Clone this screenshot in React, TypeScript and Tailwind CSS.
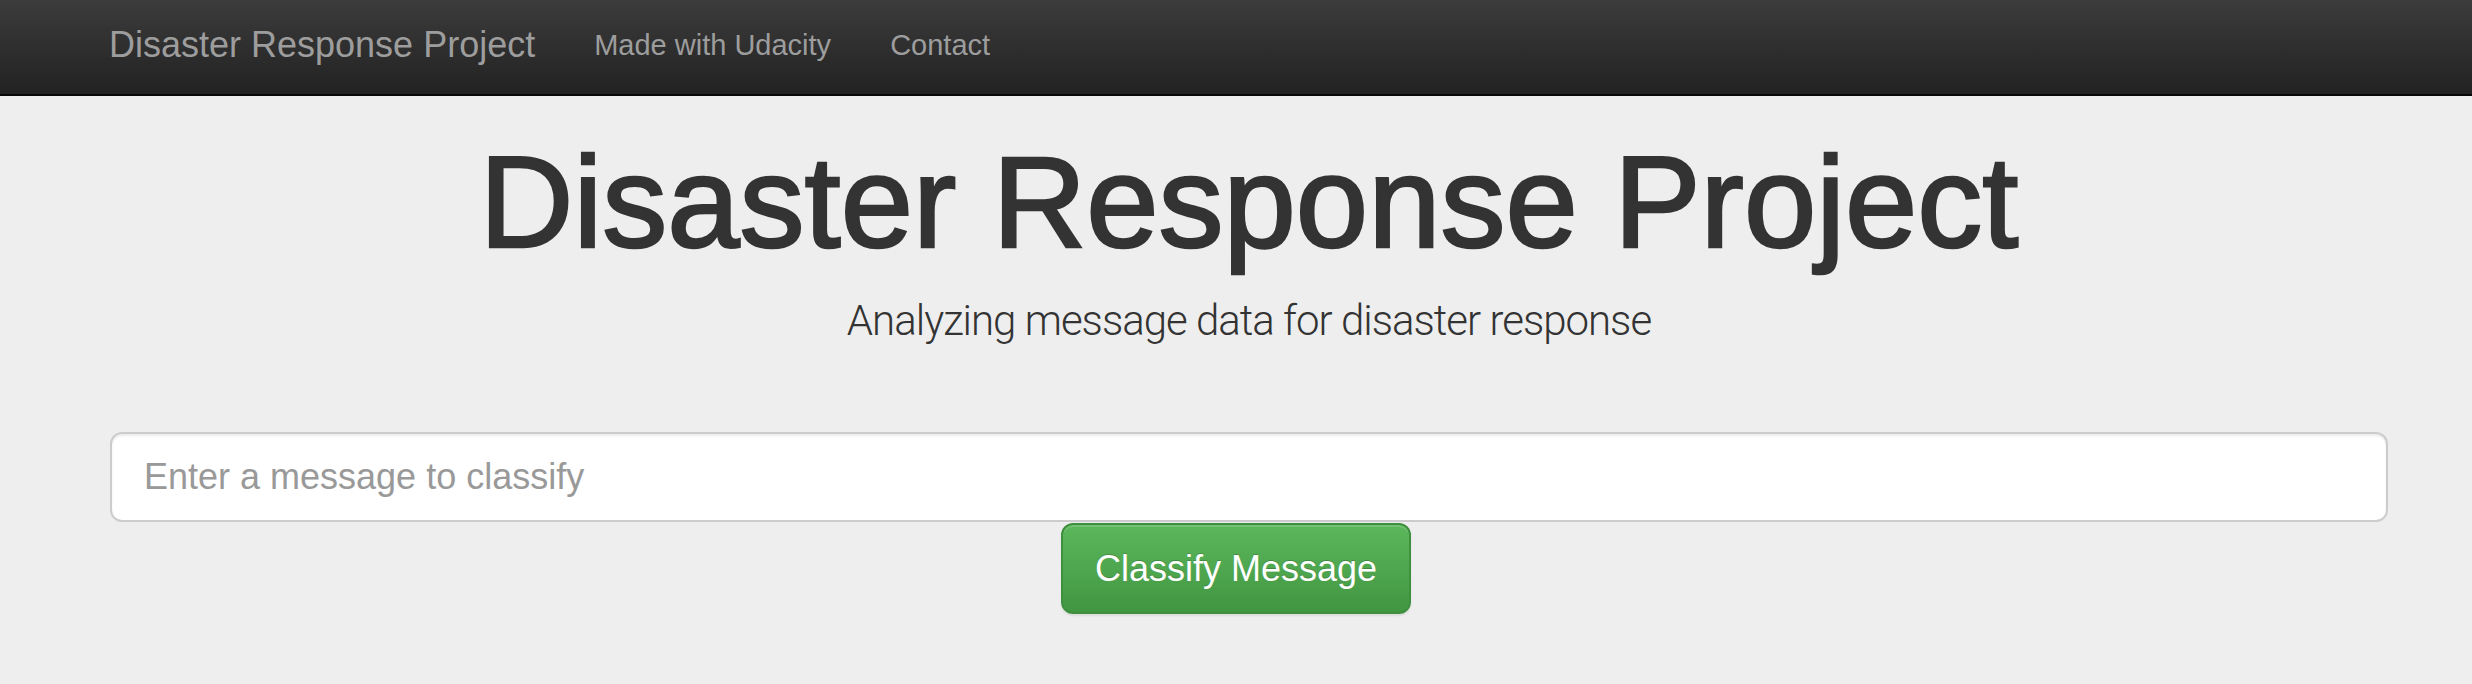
import { useState } from "react";

export default function App() {
  const [message, setMessage] = useState("");

  return (
    <div className="min-h-screen bg-[#eee] font-['Liberation_Sans',Arial,sans-serif]">
      {/* Navbar */}
      <nav className="h-[96px] border-b-2 border-[#080808] bg-linear-to-b from-[#3c3c3c] to-[#222]">
        <div className="flex h-full items-center pb-[4px] pl-[109px]">
          <a href="#" className="text-[36px] leading-[40px] text-[#9d9d9d]">
            Disaster Response Project
          </a>
          <ul className="ml-[59px] flex items-center gap-[59px]">
            <li>
              <a href="#" className="text-[29px] leading-[40px] text-[#9d9d9d]">
                Made with Udacity
              </a>
            </li>
            <li>
              <a href="#" className="text-[29px] leading-[40px] text-[#9d9d9d]">
                Contact
              </a>
            </li>
          </ul>
        </div>
      </nav>

      {/* Jumbotron */}
      <div className="pl-[110px] pr-[84px]">
        <h1 className="mt-[35px] text-center text-[130px] leading-[142px] text-[#333] [-webkit-text-stroke:2.5px_#333]">
          Disaster Response Project
        </h1>
        <p className="mt-[18px] text-center font-['Roboto',sans-serif] text-[42px] font-light leading-[59px] tracking-[-1px] text-[#333]">
          Analyzing message data for disaster response
        </p>

        <form className="mt-[82px]" onSubmit={(e) => e.preventDefault()}>
          <input
            value={message}
            onChange={(e) => setMessage(e.target.value)}
            placeholder="Enter a message to classify"
            className="block h-[90px] w-full rounded-[12px] border-2 border-[#ccc] bg-white px-[32px] text-[36px] text-[#555] shadow-[inset_0_2px_2px_rgba(0,0,0,0.075)] outline-none placeholder:text-[#999]"
          />
        </form>
      </div>

      <div className="mt-[1px] flex justify-center">
        <button
          type="button"
          className="h-[91px] rounded-[12px] border-2 border-[#3e8f3e] bg-linear-to-b from-[#5cb85c] to-[#419641] px-[32px] text-[36px] text-white shadow-[inset_0_2px_0_rgba(255,255,255,0.15),0_2px_2px_rgba(0,0,0,0.075)] [text-shadow:0_-1px_0_rgba(0,0,0,0.2)]"
        >
          Classify Message
        </button>
      </div>
    </div>
  );
}
